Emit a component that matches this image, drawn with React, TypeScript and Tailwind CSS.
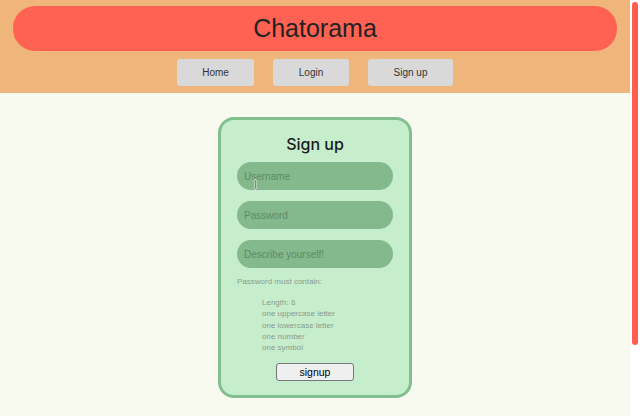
export default function App() {
    const rules = ['Length: 6', 'one uppercase letter', 'one lowercase letter', 'one number', 'one symbol'];

    return (
        <div className="flex h-screen overflow-hidden bg-white font-['Liberation_Sans',Arial,sans-serif]">
            <div className="w-[630px] shrink-0">
                <header className="h-[93px] bg-[#efb57b] px-[13px] pt-[6px]">
                    <div className="flex h-[45px] items-center justify-center rounded-[22px] bg-[#ff6153]">
                        <h1 className="text-[25px] leading-none text-[#222]">Chatorama</h1>
                    </div>
                    <nav className="mt-[8px] flex justify-center gap-[19px]">
                        <button className="h-[27px] w-[77px] rounded-[3px] bg-[#d9d9d9] text-[10px] text-[#333]">Home</button>
                        <button className="h-[27px] w-[76px] rounded-[3px] bg-[#d9d9d9] text-[10px] text-[#333]">Login</button>
                        <button className="h-[27px] w-[85px] rounded-[3px] bg-[#d9d9d9] text-[10px] text-[#333]">Sign up</button>
                    </nav>
                </header>
                <main className="flex justify-center bg-[#f8faef] pt-[24px] pb-[101px]">
                    <form className="w-[194px] rounded-[16px] border-[3px] border-[#82bf8e] bg-[#c6eecc] px-[16px] pt-[12px] pb-[14px]">
                        <h2 className="text-center font-['Inter',sans-serif] text-[16px] font-medium leading-[24px] text-[#1a1a1a]">
                            Sign up
                        </h2>
                        <div className="mt-[6px] flex flex-col gap-[11px]">
                            <div className="relative">
                                <input
                                    type="text"
                                    placeholder="Username"
                                    className="h-[28px] w-full rounded-full bg-[#83b98c] px-[7px] text-[10px] outline-none placeholder:text-[#5f8a66]"
                                />
                                <svg className="absolute left-[15px] top-[17px]" width="7" height="11" viewBox="0 0 7 11">
                                    <path d="M1 0.8h2L3.5 1.3l0.5-0.5H6M3.5 1.3v8.4M1 10.2h2l0.5-0.5 0.5 0.5H6" fill="none" stroke="#f2f2f2" strokeWidth="1.8" />
                                    <path d="M1 0.8h2L3.5 1.3l0.5-0.5H6M3.5 1.3v8.4M1 10.2h2l0.5-0.5 0.5 0.5H6" fill="none" stroke="#666" strokeWidth="0.8" />
                                </svg>
                            </div>
                            <input
                                type="password"
                                placeholder="Password"
                                className="h-[28px] w-full rounded-full bg-[#83b98c] px-[7px] text-[10px] outline-none placeholder:text-[#5f8a66]"
                            />
                            <input
                                type="text"
                                placeholder="Describe yourself!"
                                className="h-[28px] w-full rounded-full bg-[#83b98c] px-[7px] text-[10px] outline-none placeholder:text-[#5f8a66]"
                            />
                        </div>
                        <p className="mt-[8px] text-[8px] leading-[11.3px] text-[#8b9a8c]">Password must contain:</p>
                        <ul className="mt-[9.7px] pl-[25px] text-[8px] leading-[11.3px] text-[#8b9a8c]">
                            {rules.map((r) => (
                                <li key={r}>{r}</li>
                            ))}
                        </ul>
                        <div className="mt-[9.5px] flex justify-center">
                            <button
                                type="button"
                                className="h-[18px] w-[78px] rounded-[3px] border border-[#767676] bg-[#efefef] text-[10.5px] leading-none text-black"
                            >
                                signup
                            </button>
                        </div>
                    </form>
                </main>
            </div>
            {/* scrollbar */}
            <div className="w-[10px] shrink-0 bg-white px-[2px] pt-[2px]">
                <div className="h-[343px] rounded-full bg-[#ff5d50]" />
            </div>
        </div>
    );
}
